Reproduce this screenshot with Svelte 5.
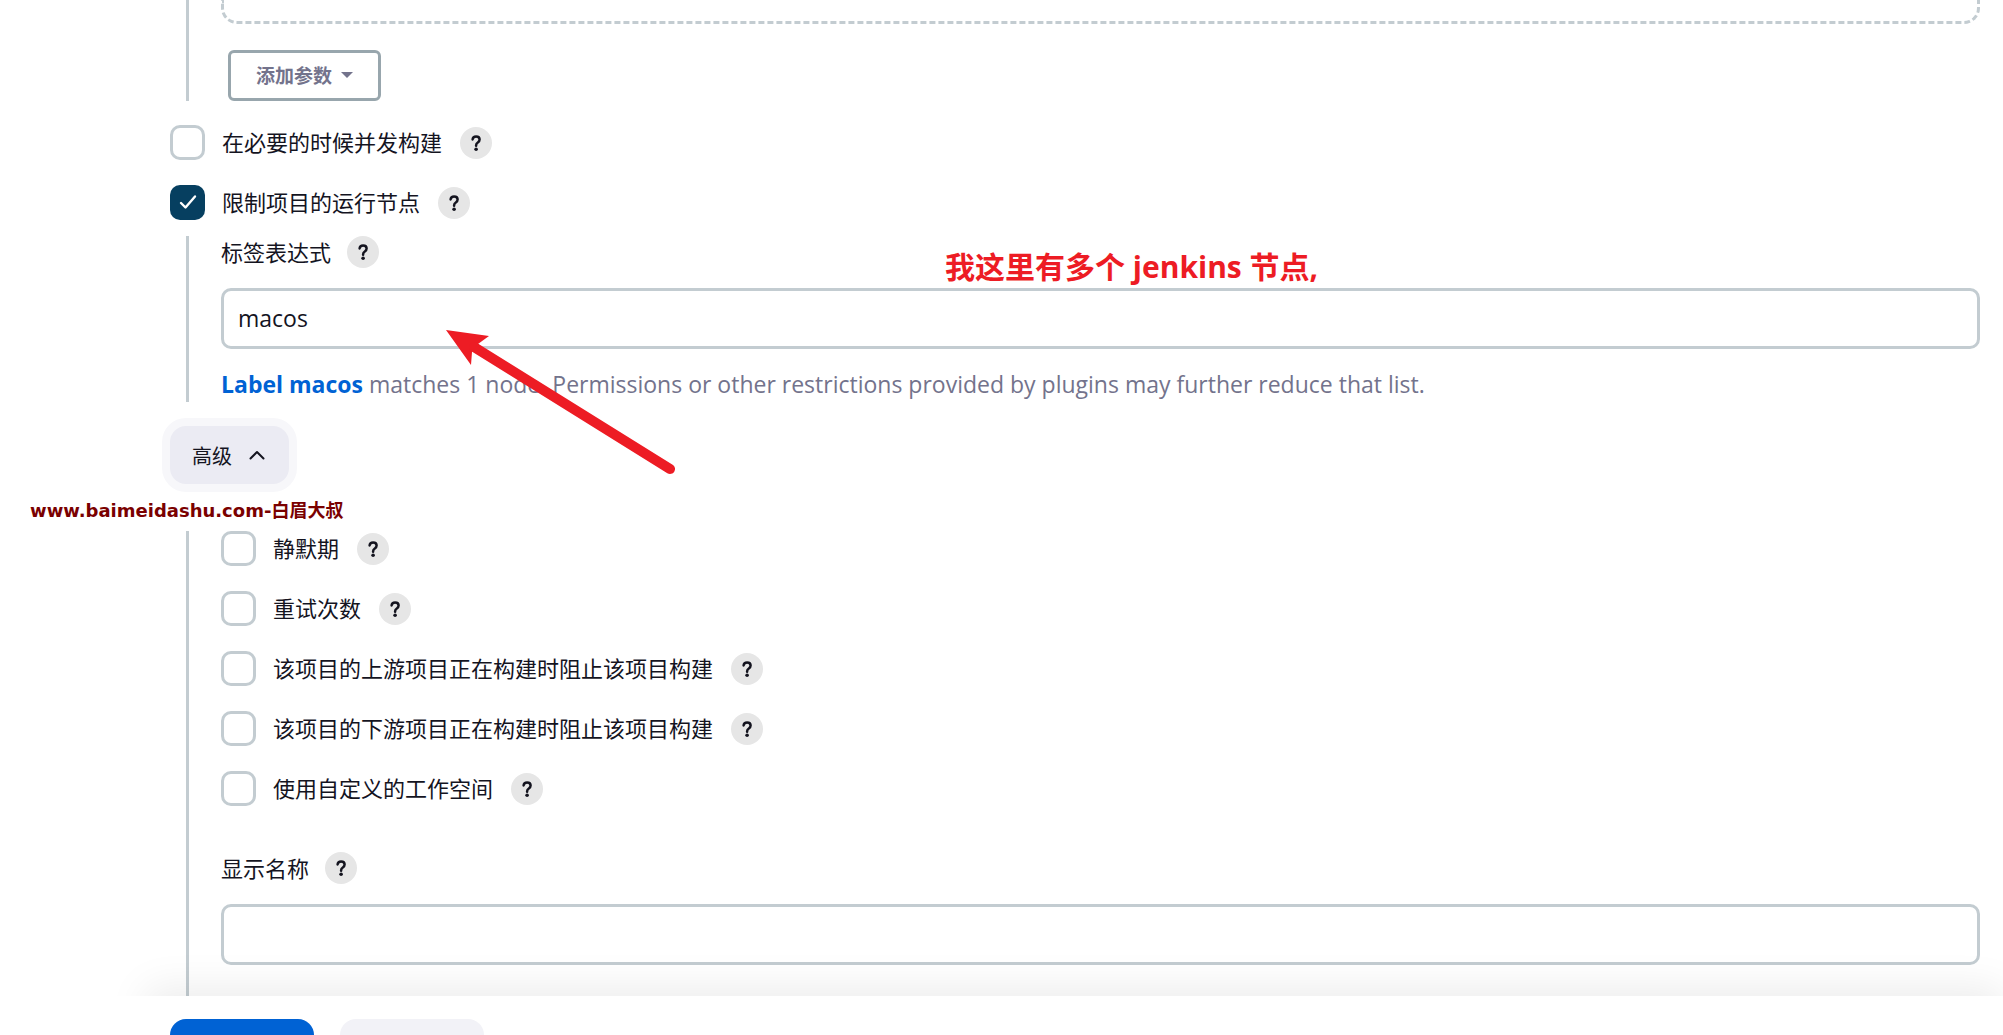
<script>
let concurrent = $state(false);
let restrict = $state(true);
let labelExpression = $state('macos');
let displayName = $state('');

let advanced = $state([
    { id: 'quiet-period', label: '静默期', checked: false },
    { id: 'retry-count', label: '重试次数', checked: false },
    { id: 'block-upstream', label: '该项目的上游项目正在构建时阻止该项目构建', checked: false },
    { id: 'block-downstream', label: '该项目的下游项目正在构建时阻止该项目构建', checked: false },
    { id: 'custom-workspace', label: '使用自定义的工作空间', checked: false }
]);
</script>

{#snippet help(name)}
    <button type="button" class="help" aria-label={`Help: ${name}`}>
        <svg viewBox="0 0 32 32" width="32" height="32" aria-hidden="true">
            <path d="M12.6 12.4c.2-1.8 1.6-3 3.500-3 2 0 3.500 1.3 3.500 3.1 0 1.4-.7 2.2-1.8 3-1.2.8-1.7 1.5-1.7 2.9v.3" />
            <circle cx="16.1" cy="22.3" r="1.8" />
        </svg>
    </button>
{/snippet}

<main>
    <section class="nested parameters">
        <div class="dropzone"></div>
        <button type="button" class="add">
            添加参数
            <svg viewBox="0 0 12 6" width="12" height="6" aria-hidden="true"><path d="M0 0h12L6 6z" /></svg>
        </button>
    </section>

    <div class="row">
        <input type="checkbox" id="concurrent" bind:checked={concurrent} />
        <label for="concurrent">在必要的时候并发构建</label>
        {@render help('在必要的时候并发构建')}
    </div>
    <div class="row">
        <input type="checkbox" id="restrict" bind:checked={restrict} />
        <label for="restrict">限制项目的运行节点</label>
        {@render help('限制项目的运行节点')}
    </div>

    <section class="nested restrict">
        <div class="field-label">
            <label for="label-expression">标签表达式</label>
            {@render help('标签表达式')}
        </div>
        <input type="text" id="label-expression" bind:value={labelExpression} />
        <p class="hint"><a href="#macos">Label macos</a> matches 1 node. Permissions or other restrictions provided by plugins may further reduce that list.</p>
        <div class="note">我这里有多个 jenkins 节点,</div>
        <svg class="arrow" viewBox="0 0 232 148" width="232" height="148" aria-hidden="true">
            <path d="M0 0l43 6-11 8-6 8-1 13z" />
            <path class="shaft" d="M28 17l196 122" />
        </svg>
    </section>

    <button type="button" class="advanced">
        高级
        <svg viewBox="0 0 16 10" width="16" height="10" aria-hidden="true"><path d="M1.5 8.5L8 2l6.5 6.5" /></svg>
    </button>
    <div class="watermark">www.baimeidashu.com-白眉大叔</div>

    <section class="nested options">
        {#each advanced as option (option.id)}
            <div class="row">
                <input type="checkbox" id={option.id} bind:checked={option.checked} />
                <label for={option.id}>{option.label}</label>
                {@render help(option.label)}
            </div>
        {/each}
        <div class="field-label display-name">
            <label for="display-name">显示名称</label>
            {@render help('显示名称')}
        </div>
        <input type="text" id="display-name" bind:value={displayName} />
    </section>

    <footer>
        <div class="actions">
            <button type="submit" class="save" aria-label="保存"></button>
            <button type="button" class="apply" aria-label="应用"></button>
        </div>
    </footer>
</main>

<style>
:global(body) {
    margin: 0;
    background: #fff;
}

main {
    box-sizing: border-box;
    height: 100vh;
    overflow: hidden;
    padding: 0 23px 0 170px;
    font-family: "Open Sans", "Noto Sans CJK SC", sans-serif;
    font-size: 22px;
    line-height: 32px;
    color: #14141f;
}

button,
input {
    box-sizing: border-box;
    margin: 0;
    font-family: inherit;
    color: inherit;
}

button {
    cursor: pointer;
}

.nested {
    position: relative;
    margin-left: 16px;
    padding-left: 32px;
    border-left: 3px solid #c3ccd1;
}

.parameters {
    height: 101px;
    margin-bottom: 24px;
}

.dropzone {
    box-sizing: border-box;
    height: 24px;
    border: 3px dashed #c3ccd1;
    border-top: 0;
    border-radius: 0 0 16px 16px;
}

.add {
    display: flex;
    align-items: center;
    gap: 9px;
    height: 51px;
    margin: 26px 0 0 7px;
    padding: 0 25px 2px;
    background: #fff;
    border: 3px solid #98a6ad;
    border-radius: 6px;
    color: #73738c;
    font-size: 19px;
    font-weight: 700;
}

.add svg {
    fill: #73738c;
}

.row {
    display: flex;
    align-items: center;
    height: 35px;
    margin-bottom: 25px;
}

.row label {
    margin: 0 18px 2px 17px;
}

input[type="checkbox"] {
    appearance: none;
    flex: none;
    width: 35px;
    height: 35px;
    background: #fff;
    border: 3px solid #c3ccd1;
    border-radius: 10px;
    cursor: pointer;
}

input[type="checkbox"]:checked {
    background: #063f60 url("data:image/svg+xml,%3Csvg xmlns='http://www.w3.org/2000/svg' viewBox='0 0 35 35'%3E%3Cpath d='M11 18l4.5 4.5L25 11.5' fill='none' stroke='white' stroke-width='2.4' stroke-linecap='round' stroke-linejoin='round'/%3E%3C/svg%3E") center / 35px 35px;
    background-origin: border-box;
    border-color: transparent;
}

.help {
    flex: none;
    width: 32px;
    height: 32px;
    padding: 0;
    background: #e6e6e6;
    border: none;
    border-radius: 50%;
}

.help svg {
    display: block;
    fill: #14141f;
}

.help path {
    fill: none;
    stroke: #14141f;
    stroke-width: 2.5;
    stroke-linecap: round;
}

.restrict {
    height: 166px;
    margin-top: -9px;
    margin-bottom: 24px;
}

.field-label {
    display: flex;
    align-items: center;
    gap: 16px;
    margin-bottom: 20px;
}

input[type="text"] {
    display: block;
    width: 100%;
    height: 61px;
    padding: 0 14px 2px;
    background: #fff;
    border: 3px solid #c3ccd1;
    border-radius: 10px;
    font-size: 23px;
}

.hint {
    margin: 19px 0 0;
    color: #73738c;
    font-size: 23px;
}

.hint a {
    color: #0062d4;
    font-weight: 700;
    text-decoration: none;
}

.note {
    position: absolute;
    top: 11px;
    left: 756px;
    color: #ed1c24;
    font-size: 30px;
    font-weight: 700;
    line-height: 40px;
    white-space: nowrap;
}

.arrow {
    position: absolute;
    top: 94px;
    left: 257px;
    fill: #ed1c24;
}

.arrow .shaft {
    fill: none;
    stroke: #ed1c24;
    stroke-width: 10;
    stroke-linecap: round;
}

.advanced {
    display: flex;
    align-items: center;
    gap: 17px;
    height: 58px;
    padding: 0 24px 0 22px;
    background: #ebebf3;
    border: none;
    border-radius: 16px;
    box-shadow: 0 0 0 8px #f7f7fa;
    font-size: 20px;
}

.advanced svg {
    fill: none;
    stroke: #14141f;
    stroke-width: 2;
    stroke-linecap: round;
    stroke-linejoin: round;
}

.watermark {
    margin: 15px 0 8px -140px;
    color: #7a0000;
    font-family: "DejaVu Sans", "Noto Sans CJK SC", sans-serif;
    font-size: 18px;
    font-weight: 700;
    line-height: 24px;
}

.options {
    padding-bottom: 31px;
}

.display-name {
    margin-top: 46px;
}

footer {
    position: relative;
    margin: 0 -23px 0 -170px;
}

footer::before {
    content: "";
    position: absolute;
    inset: 0 0 0 146px;
    box-shadow: 0 -8px 40px rgba(0, 0, 0, 0.08);
}

.actions {
    position: relative;
    display: flex;
    gap: 26px;
    padding: 23px 170px;
    background: #fff;
}

.actions button {
    width: 144px;
    height: 58px;
    border: none;
    border-radius: 16px;
}

.save {
    background: #0062d4;
}

.apply {
    background: #f2f2f7;
}
</style>
